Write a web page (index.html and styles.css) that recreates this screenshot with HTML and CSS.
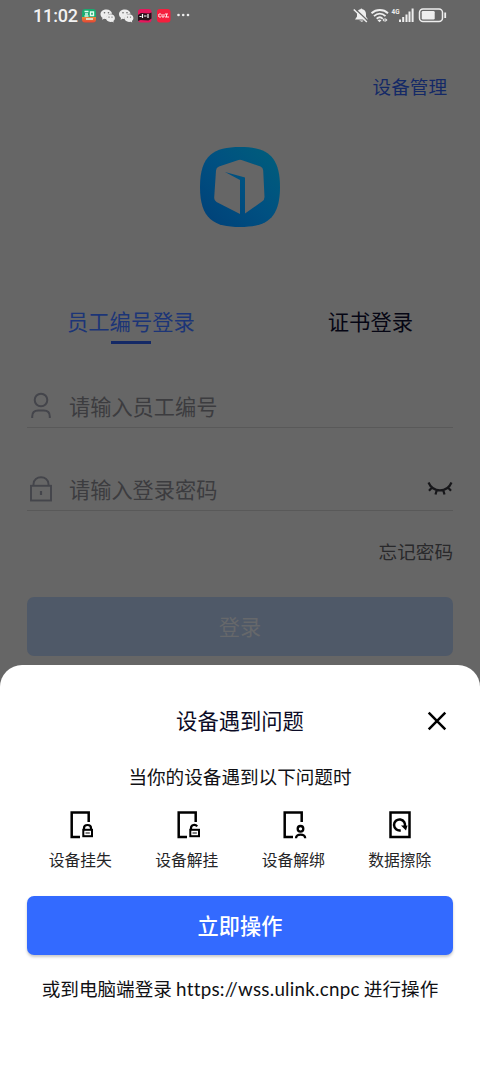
FILE: index.html
```html
<!DOCTYPE html>
<html lang="zh-CN">
<head>
<meta charset="utf-8">
<title>设备管理</title>
<link rel="stylesheet" href="styles.css">
</head>
<body>
<div class="screen">
  <header class="status">
    <span class="time">11:02</span>
    <svg class="status-left" width="110" height="16" viewBox="0 0 110 16">
      <defs><linearGradient id="app" x1="0" y1="0" x2="0" y2="1"><stop offset=".6" stop-color="#19aa70"/><stop offset=".62" stop-color="#e7873c"/><stop offset="1" stop-color="#e74332"/></linearGradient></defs>
      <rect x="0" y="1" width="14" height="13.500" rx="3" fill="url(#app)"/>
      <path d="M2.500 3.500h4M3 6h3M2.500 8h4M8.500 4h3v3.500h-3zM4 11h7" fill="none" stroke="#e3fff0" stroke-width="1.400"/>
      <g id="chat">
        <path fill="#ededed" d="M24.500 1.500c-3.500 0-6 2-6 4.700 0 1.500.8 2.800 2 3.600l-.4 1.900 2-1c.7.200 1.300.3 2 .3 0-3.200 2.700-5.200 6-5.200-.4-2.500-2.700-4.300-5.600-4.300z"/>
        <path fill="#ededed" d="M28.500 6.300c-2.700 0-4.600 1.700-4.600 3.800s2 3.800 4.600 3.800l1.700-.2 1.500.8-.3-1.500c1-.7 1.500-1.700 1.500-2.900 0-2.100-1.800-3.800-4.400-3.800z"/>
        <g fill="#666"><circle cx="22.500" cy="4.800" r=".8"/><circle cx="26.500" cy="4.800" r=".8"/><circle cx="27" cy="9.100" r=".7"/><circle cx="30" cy="9.100" r=".7"/></g>
      </g>
      <use href="#chat" x="18.500"/>
      <rect x="56" y="1" width="13.500" height="13.500" rx="3" fill="#e5175c"/>
      <path d="M56 7l3-2 8 .500 2.500-1v6l-3 2-8-.500-2.500 1z" fill="#26131c"/>
      <path d="M57.500 8.500h2M60.500 6v4M62 8h2.500M66 6v4" stroke="#fff" stroke-width="1.200"/>
      <rect x="75" y="1" width="13.500" height="13.500" rx="3" fill="#f51f3d"/>
      <path d="M77 6h2M77 9h2M76.800 6v3M80 6v3h2V6M83 6h3M84.500 6v3M83 9h4" fill="none" stroke="#ffe3e5" stroke-width="1"/>
      <g fill="#ededed"><circle cx="96.500" cy="7" r="1.300"/><circle cx="101.200" cy="7" r="1.300"/><circle cx="106" cy="7" r="1.300"/></g>
    </svg>
    <svg class="status-right" width="96" height="18" viewBox="0 0 96 18">
      <path fill="#eee" d="M2 12.500l2-3V7c0-2.800 1.300-4.400 3.400-4.800a1.100 1.100 0 0 1 2 0C11.500 2.600 13 4.300 13 7v2.500l2 3zM6.500 13.500h4c-.4 1.600-3.600 1.600-4 0z"/>
      <path d="M2.500 2.300L14.500 13.500" stroke="#666" stroke-width="1.300"/><path d="M.8 2.500L13.800 15" stroke="#eee" stroke-width="1.500"/>
      <g fill="none" stroke="#eee" stroke-width="1.900"><path d="M18.500 6.200c4.800-4.300 12-4.300 16.500 0M21 9.100c3.500-3.200 8-3.200 11.500 0M23.700 11.800c2-1.800 4.300-1.800 6 0"/></g>
      <path fill="#eee" d="M24.500 13.200c1.300-1 2.700-1 4 0l-2 2zM29.500 13l2-2v4zM32.300 11l2.200 2-2.200 2z"/>
      <text class="network" x="38.500" y="7.200" textLength="8" lengthAdjust="spacingAndGlyphs">4G</text>
      <path fill="#eee" d="M46 12.500h2v2.500h-2zM49.200 10h2v5h-2zM52.500 7.500h2V15h-2zM55.500 4.500h2V15h-2zM58.600 1.500h2V15h-2z"/>
      <rect x="66.500" y="2" width="23" height="12.500" rx="3.500" fill="none" stroke="#eee" stroke-width="1.500"/><rect x="68.700" y="4" width="13" height="8.500" rx="1.200" fill="#eee"/><path d="M92.200 5.500v5.500" stroke="#eee" stroke-width="1.800"/>
    </svg>
  </header>

  <main class="login">
    <a class="manage">设备管理</a>
    <svg class="logo" width="80" height="80" viewBox="0 0 80 80">
      <defs><linearGradient id="blue" x1="1" y1="0" x2="0" y2="1"><stop stop-color="#005f7b"/><stop offset=".5" stop-color="#005081"/><stop offset="1" stop-color="#004078"/></linearGradient></defs>
      <path fill="url(#blue)" d="M40 0C66 0 80 8 80 40S66 80 40 80 0 72 0 40 14 0 40 0z"/>
      <path fill="#666" d="M37 13.500q3-1.300 6 0l17.500 6q2.500 1 2.700 4L64.500 50q0 3-2.500 4.500L45 66.500V30.500L25 25l15 8v34L16.500 55q-2.500-1.500-2.300-4.500L16 23.500q.2-3 3-4z"/>
    </svg>
    <nav class="tabs">
      <span class="tab tab-active">员工编号登录</span>
      <span class="tab">证书登录</span>
    </nav>
    <div class="field">
      <svg width="28" height="28" viewBox="0 0 28 28" fill="none" stroke="#44454b" stroke-width="2"><circle cx="14" cy="8" r="6.300"/><path d="M5.200 26v-1.500c0-4 2.500-6 6-6h5.600c3.500 0 6 2 6 6V26"/></svg>
      <span>请输入员工编号</span>
    </div>
    <div class="field field-password">
      <svg width="28" height="28" viewBox="0 0 28 28" fill="none" stroke="#44454b" stroke-width="1.900"><rect x="4" y="10.800" width="20" height="14.700"/><path d="M6.500 10.800V9c0-9 15-9 15 0v1.800"/><path d="M14 16v4" stroke-width="2.200"/></svg>
      <span>请输入登录密码</span>
      <svg class="eye" width="26" height="18" viewBox="0 0 26 18" fill="none" stroke="#17171a" stroke-width="2.200"><path d="M1.500 2.500c4.500 10.500 18.500 10.500 23 0M5 7.500l-3 3.300M9.800 10l-1.300 4.500M16.200 10l1.300 4.500M21 7.500l3 3.300"/></svg>
    </div>
    <a class="forgot">忘记密码</a>
    <div class="button login-button"><span>登录</span></div>
  </main>

  <section class="sheet">
    <div class="sheet-head">
      <h1>设备遇到问题</h1>
      <svg class="close" width="20" height="20" viewBox="0 0 20 20"><path d="M1.700 1.700l16.600 16.600M18.300 1.700L1.700 18.300" stroke="#000" stroke-width="2.500"/></svg>
    </div>
    <p class="intro">当你的设备遇到以下问题时</p>
    <div class="issues">
      <div class="issue">
        <svg width="28" height="28" viewBox="0 0 28 28" fill="none" stroke="#000" stroke-width="2.500"><path d="M14 26H5.700V1.500h17V11"/><path d="M18 18.500V17c0-4 7-4 7 0v1.500" stroke-width="2.200"/><rect x="17.300" y="18.800" width="8.700" height="6.400" stroke-width="2"/><path d="M19.500 22h4.300" stroke-width="1"/></svg>
        <span>设备挂失</span>
      </div>
      <div class="issue">
        <svg width="28" height="28" viewBox="0 0 28 28" fill="none" stroke="#000" stroke-width="2.500"><path d="M14 26H5.700V1.500h17V11"/><path d="M18 18.500V17c0-3.300 4.300-4.200 6.200-1.700" stroke-width="2.200"/><rect x="17.300" y="18.800" width="8.700" height="6.400" stroke-width="2"/><path d="M19.500 22h4.300" stroke-width="1"/></svg>
        <span>设备解挂</span>
      </div>
      <div class="issue">
        <svg width="28" height="28" viewBox="0 0 28 28" fill="none" stroke="#000" stroke-width="2.500"><path d="M14 26H5.700V1.500h17V11"/><circle cx="21.500" cy="17.800" r="2.800" stroke-width="2.300"/><path d="M17 27.200c0-4.800 9.200-4.800 9.200 0" stroke-width="2.300"/></svg>
        <span>设备解绑</span>
      </div>
      <div class="issue">
        <svg width="28" height="28" viewBox="0 0 28 28" fill="none" stroke="#000" stroke-width="2.500"><rect x="4.500" y="1.500" width="19" height="24.500"/><path d="M14.700 19.300a5.500 5.500 0 1 1 4-3.500"/><path d="M15 14.500h6.500l-1.500 5z" fill="#000" stroke="none"/></svg>
        <span>数据擦除</span>
      </div>
    </div>
    <div class="button action-button"><span>立即操作</span></div>
    <p class="hint">或到电脑端登录 <span class="url">https://wss.ulink.cnpc</span> 进行操作</p>
  </section>
</div>
</body>
</html>
```
FILE: styles.css
```css
* { box-sizing: border-box; }
body { margin: 0; background: #666; font-family: "Noto Sans CJK SC", sans-serif; }
h1, p { margin: 0; font-weight: 400; }
svg { display: block; flex: none; }
.screen { width: 480px; height: 1067px; overflow: hidden; display: flex; flex-direction: column; }

.status { height: 32px; flex: none; display: flex; align-items: flex-start; padding: 0 31px 0 33px; }
.time { width: 49px; margin-top: 4px; font: 500 18px/24px Roboto, sans-serif; letter-spacing: -.15px; color: #f2f2f2; }
.status-left { margin-top: 8px; }
.status-right { margin: 7px 0 0 auto; }
.network { font: 700 8px Roboto, sans-serif; fill: #eee; }

.login { height: 633px; flex: none; display: flex; flex-direction: column; padding: 0 27px; }
.manage { align-self: flex-end; margin: 40px 6px 0 0; font-size: 18.6px; line-height: 28px; color: #142966; }
.logo { align-self: center; margin-top: 47px; }
.tabs { display: flex; justify-content: space-between; margin-top: 78px; padding: 0 40px; height: 40px; }
.tab { font-size: 21.3px; line-height: 32px; color: #060614; display: flex; flex-direction: column; align-items: center; }
.tab-active { color: #1c3577; }
.tab-active::after { content: ""; width: 40px; height: 3px; margin-top: 4px; background: #142966; }
.field { display: flex; align-items: center; gap: 14px; height: 44px; margin-top: 39px; border-bottom: 1px solid #595959; font-size: 21.2px; line-height: 32px; color: #3c3c3f; }
.field-password { margin-top: 39px; }
.eye { margin-left: auto; }
.forgot { align-self: flex-end; margin-top: 26px; font-size: 18.6px; line-height: 28px; color: #29292b; }
.button { display: flex; justify-content: center; width: 426px; height: 59px; padding-top: 13px; border-radius: 7px; font-size: 21.2px; line-height: 31px; }
.login-button { margin-top: 32px; background: #4f5968; color: #66686b; }

.sheet { flex: 1; padding: 36px 27px 0; background: #fff; border-radius: 22px 22px 0 0; color: #101014; }
.sheet-head { display: grid; grid-template-columns: 1fr auto 1fr; align-items: center; height: 40px; }
h1 { grid-column: 2; padding-bottom: 2px; font-size: 21.3px; line-height: 38px; color: #0b0b26; }
.close { justify-self: end; margin-right: 6px; }
.intro { margin-top: 21px; text-align: center; font-size: 18.6px; line-height: 28px; }
.issues { display: grid; grid-template-columns: repeat(4, 1fr); margin-top: 21px; height: 61px; }
.issue { display: flex; flex-direction: column; align-items: center; gap: 9px; font-size: 15.8px; line-height: 24px; color: #252527; }
.action-button { margin-top: 24px; background: #336aff; color: #fff; font-weight: 500; box-shadow: 0 2px 3px rgba(0, 0, 0, .22); }
.hint { margin-top: 19px; text-align: center; white-space: nowrap; font-size: 18.6px; line-height: 28px; }
.url { font-family: Lato, sans-serif; font-size: 18.8px; letter-spacing: .25px; }
```
